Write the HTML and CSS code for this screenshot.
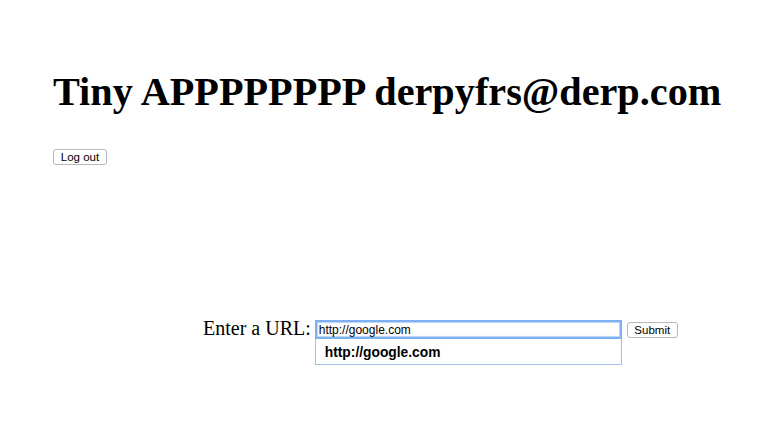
FILE: index.html
```html
<!DOCTYPE html>
<html>
<head>
<meta charset="utf-8">
<link rel="stylesheet" href="styles.css">
</head>
<body>
<div class="page">
  <h1 class="title">Tiny APPPPPPPP derpyfrs@derp.com</h1>
  <button class="btn logout">Log out</button>
  <div class="url-form">
    <span class="url-label">Enter a URL:</span>
    <div class="field">
      <div class="url-input">http://google.com</div>
      <div class="suggest">http://google.com</div>
    </div>
    <button class="btn submit" type="button">Submit</button>
  </div>
</div>
</body>
</html>
```
FILE: styles.css
```css
html, body { margin: 0; padding: 0; background: #fff; }
.page { padding: 0 0 0 53px; }
.title {
  font-family: "Liberation Serif", "Times New Roman", serif;
  font-weight: bold;
  font-size: 40.25px;
  line-height: 46px;
  margin: 0;
  padding-top: 69px;
  color: #000;
}
.btn {
  font-family: "Liberation Sans", Arial, sans-serif;
  font-size: 11.5px;
  color: #000;
  background: #fff;
  border: 1px solid #b8b8b8;
  border-radius: 3px;
  height: 16px;
  padding: 0;
  line-height: 14px;
  display: block;
}
.logout { margin-top: 34px; width: 54px; }
.url-form {
  display: flex;
  align-items: flex-start;
  margin: 155px 0 0 150px;
}
.url-label {
  font-family: "Liberation Serif", "Times New Roman", serif;
  font-size: 20px;
  line-height: 20px;
  margin-top: -2px;
  margin-right: 4px;
}
.field { display: flex; flex-direction: column; width: 307px; }
.url-input {
  height: 19px;
  box-sizing: border-box;
  border: 2px solid #7eaff0;
  box-shadow: 0 0 1px 1px #b9d4f7 inset;
  font-family: "Liberation Sans", Arial, sans-serif;
  font-size: 12px;
  line-height: 16px;
  padding-left: 2px;
}
.suggest {
  height: 26px;
  box-sizing: border-box;
  border: 1px solid #9cc3ee;
  border-top: none;
  background: #fff;
  font-family: "Liberation Sans", Arial, sans-serif;
  font-weight: bold;
  font-size: 13.8px;
  line-height: 27px;
  padding-left: 9px;
  color: #000;
}
.submit { margin: 2px 0 0 5px; width: 51px; height: 16px; }
```
